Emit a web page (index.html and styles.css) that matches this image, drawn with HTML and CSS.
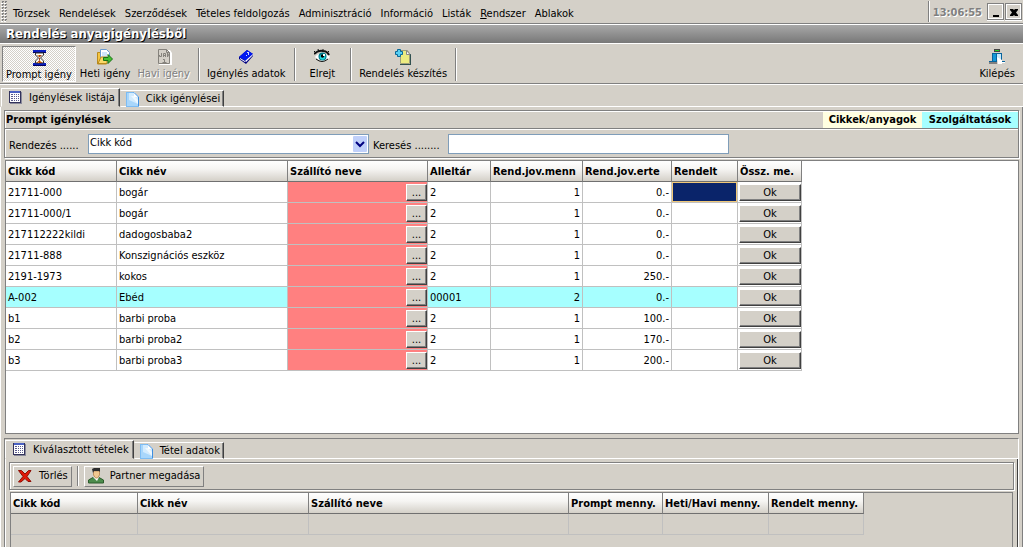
FILE: index.html
```
<!DOCTYPE html>
<html lang="hu">
<head>
<meta charset="utf-8">
<title>Rendelés anyagigénylésből</title>
<link rel="stylesheet" href="styles.css">
</head>
<body>
<svg class="defs" aria-hidden="true">
  <symbol id="i-table" viewBox="0 0 14 14">
    <path fill="#8a8a9a" d="M1 1h12v12H1z"/><path fill="#33335c" d="M0 0h12v12H0z"/><path fill="#fff" d="M1 2h10v9H1z"/>
    <path fill="#5b5b8c" d="M2 3h2v1H2zM5 3h1v1H5zM7 3h1v1H7zM9 3h1v1H9zM2 5h2v1H2zM5 5h1v1H5zM7 5h1v1H7zM9 5h1v1H9zM2 7h2v1H2zM5 7h1v1H5zM7 7h1v1H7zM9 7h1v1H9zM2 9h2v1H2zM5 9h1v1H5zM7 9h1v1H7zM9 9h1v1H9z"/>
    <path fill="#4b62c4" d="M1 0h10v2H1z"/>
  </symbol>
  <symbol id="i-page" viewBox="0 0 14 16">
    <path fill="#a8d6fb" d="M0 1h8l5 5v10H0z"/><path fill="#d2ebfe" d="M3 2h5v4h4v7L3 9z"/><path fill="#eef8ff" d="M5 5h3l4 4v4z"/>
    <path fill="#7dbcf3" d="M0 1h8v1H1v13h12v1H0z"/><path fill="#fff" d="M8 1v5h5z"/><path fill="none" stroke="#3f8fe0" d="M8 1.500l4.500 4.500v9"/>
  </symbol>
</svg>

<header class="menubar">
  <span class="grip"></span>
  <nav class="menu">
    <button>Törzsek</button><button>Rendelések</button><button>Szerződések</button><button>Tételes feldolgozás</button><button>Adminisztráció</button><button>Információ</button><button>Listák</button><button><u>R</u>endszer</button><button>Ablakok</button>
  </nav>
  <div class="clock">13:06:55</div>
  <div class="winbuttons">
    <button aria-label="Kis méret"><svg width="14" height="14" viewBox="0 0 14 14"><path d="M4 10h6v2H4z"/></svg></button>
    <button aria-label="Bezárás"><svg width="14" height="14" viewBox="0 0 14 14"><path d="M3 4h3l1 1 1-1h3v1L9 7.500 11 10v1H8l-1-1-1 1H3v-1l2-2.500L3 5z"/></svg></button>
  </div>
</header>
<h1 class="title">Rendelés anyagigénylésből</h1>

<div class="toolbar">
  <button class="tool pressed">
    <svg width="16" height="16" viewBox="0 0 16 16"><path fill="#0a1ec0" d="M2 0h13v3H2zM2 13h13v3H2z"/><path fill="#000060" d="M2 2h13v1H2zM2 15h13v1H2z"/><path fill="#fff" stroke="#333" d="M4.500 3v2l3 3-3 3v2h8v-2l-3-3 3-3V3z"/><path fill="#b04010" d="M6 5h5L8.500 7.500zM8 8h1v2H8zM5.500 13l3-3 3 3z"/><path fill="#f0b020" d="M7 5h1v1H7zM9 11h1v1H9zM7 12h1v1H7z"/></svg>
    <span>Prompt igény</span></button>
  <button class="tool">
    <svg width="16" height="16" viewBox="0 0 16 16"><path fill="#f5c542" stroke="#b98a1c" d="M.5 3.500h3V12h6v3H.5z"/><path fill="#fff" stroke="#6a9ad0" d="M3.500.5h6l3 3V11h-9z"/><path fill="#cfe4fa" d="M5 3h5v5H5z"/><path fill="#f9d868" stroke="#b98a1c" d="M1 14.500L4 8h6v6.500z"/><path fill="#44c030" stroke="#187018" d="M6.500 8.500H11V5.500l4.500 4.500-4.500 4.500v-3H6.500z"/></svg>
    <span>Heti igény</span></button>
  <button class="tool" disabled>
    <svg width="16" height="16" viewBox="0 0 16 16"><path fill="#fff" d="M3 1h11l2 3v12H3z"/><path fill="#d4d0c8" stroke="#85827c" d="M2.500.5h8l3 3v11h-11z"/><path fill="none" stroke="#85827c" d="M10.500.5v3h3M5.500 4v3.500h-2V6M7.500 8V4.500h2V8M7 6.500h3M11.500 8V4l2 4V4M7 10.500h1.500v3M6.500 13.500h4"/></svg>
    <span>Havi igény</span></button>
  <i class="sep"></i>
  <button class="tool">
    <svg width="16" height="16" viewBox="0 0 16 16"><path fill="#000080" d="M1 8l8-7 6 4v2l-7 8-7-5z"/><path fill="#0018f0" d="M1 8l8-7 6 4-7 7z"/><path fill="#fff" d="M7 12l1 1 7-7V5zM2 9l5 3v1L2 10z"/><path fill="#d0d8ff" d="M9 3h2v1H9zM10 4h1v2h-1zM8 6h1v1H8z"/></svg>
    <span>Igénylés adatok</span></button>
  <i class="sep"></i>
  <button class="tool roomy">
    <svg width="16" height="16" viewBox="0 0 16 16"><path fill="#fff" d="M1 8q7-8 15 0-7 8-15 0z"/><path fill="none" stroke="#111" stroke-width="2" d="M0 5q4-4 9-3 4 0 6 4"/><path stroke="#111" d="M2 4L0 2M5 3L4 0M9 2V0M13 4l2-2M2 10q6 5 12 0" fill="none"/><circle cx="8.500" cy="7.500" r="4" fill="#007c8c"/><circle cx="8.500" cy="8" r="2.800" fill="#20d8e0"/><circle cx="8.500" cy="7" r="1.800"/><path fill="#fff" d="M9 5h2v2H9z"/></svg>
    <span>Elrejt</span></button>
  <i class="sep"></i>
  <button class="tool">
    <svg width="16" height="16" viewBox="0 0 16 16"><path fill="#305050" d="M5 15h11v1H5zM15 5h1v10h-1z"/><path fill="#ecec80" stroke="#a0a078" d="M5.500 1.500h7l2 3v10h-9z"/><path fill="#fff" stroke="#888" d="M11.500 1.500v4h3.500z"/><path fill="#58d0f4" stroke="#086898" d="M2.500.5h3v2h2v3h-2v2h-3v-2h-2v-3h2z"/></svg>
    <span>Rendelés készítés</span></button>
  <i class="sep"></i>
  <button class="tool exit">
    <svg width="16" height="16" viewBox="0 0 16 16"><path fill="#444" d="M5 0h6v3H5z"/><path fill="#20d020" d="M6 1h4v1H6z"/><path fill="#808080" d="M0 13h8v2H0z"/><path fill="#07639c" d="M3 4h10v8h3v1h-4V5H8v8H0v-1h3z"/><path fill="#1498d8" d="M4 5h3v7H4z"/><path fill="#c6e8fa" d="M8 5h4v8l-4-2z"/><path fill="#fff" d="M8 8l5 3v4H9zM13 13h3v1h-3z"/></svg>
    <span>Kilépés</span></button>
</div>

<div class="tabs outer">
  <button class="tab active"><svg width="14" height="14"><use href="#i-table"/></svg>Igénylések listája</button>
  <button class="tab"><svg width="14" height="16"><use href="#i-page"/></svg>Cikk igénylései</button>
</div>

<main class="page">
  <section class="filter">
    <div class="filter-head">
      <h2>Prompt igénylések</h2>
      <span class="legend items">Cikkek/anyagok</span><span class="legend services">Szolgáltatások</span>
    </div>
    <div class="filter-row">
      <label for="sort">Rendezés ......</label>
      <span class="combo"><select id="sort"><option>Cikk kód</option></select>
        <svg class="arrow" width="14" height="16" viewBox="0 0 14 16"><rect width="14" height="16" rx="1" fill="#c0d0fa"/><path d="M3 6l4 4 4-4" fill="none" stroke="#000080" stroke-width="2"/></svg></span>
      <label for="search">Keresés ........</label>
      <input id="search" type="text">
    </div>
  </section>

  <section class="grid-box main-grid">
    <table class="grid">
      <colgroup><col class="w111"><col class="w171"><col class="w140"><col class="w63"><col class="w92"><col class="w89"><col class="w66"><col class="w64"></colgroup>
      <thead><tr><th>Cikk kód</th><th>Cikk név</th><th>Szállító neve</th><th>Alleltár</th><th>Rend.jov.menn</th><th>Rend.jov.erte</th><th>Rendelt</th><th>Össz. me.</th></tr></thead>
      <tbody>
        <tr><td>21711-000</td><td>bogár</td><td class="vendor"><button>...</button></td><td>2</td><td class="num">1</td><td class="num">0.-</td><td class="selected"></td><td class="act"><button>Ok</button></td></tr>
        <tr><td>21711-000/1</td><td>bogár</td><td class="vendor"><button>...</button></td><td>2</td><td class="num">1</td><td class="num">0.-</td><td></td><td class="act"><button>Ok</button></td></tr>
        <tr><td>217112222kildi</td><td>dadogosbaba2</td><td class="vendor"><button>...</button></td><td>2</td><td class="num">1</td><td class="num">0.-</td><td></td><td class="act"><button>Ok</button></td></tr>
        <tr><td>21711-888</td><td>Konszignációs eszköz</td><td class="vendor"><button>...</button></td><td>2</td><td class="num">1</td><td class="num">0.-</td><td></td><td class="act"><button>Ok</button></td></tr>
        <tr><td>2191-1973</td><td>kokos</td><td class="vendor"><button>...</button></td><td>2</td><td class="num">1</td><td class="num">250.-</td><td></td><td class="act"><button>Ok</button></td></tr>
        <tr class="service"><td>A-002</td><td>Ebéd</td><td class="vendor"><button>...</button></td><td>00001</td><td class="num">2</td><td class="num">0.-</td><td></td><td class="act"><button>Ok</button></td></tr>
        <tr><td>b1</td><td>barbi proba</td><td class="vendor"><button>...</button></td><td>2</td><td class="num">1</td><td class="num">100.-</td><td></td><td class="act"><button>Ok</button></td></tr>
        <tr><td>b2</td><td>barbi proba2</td><td class="vendor"><button>...</button></td><td>2</td><td class="num">1</td><td class="num">170.-</td><td></td><td class="act"><button>Ok</button></td></tr>
        <tr><td>b3</td><td>barbi proba3</td><td class="vendor"><button>...</button></td><td>2</td><td class="num">1</td><td class="num">200.-</td><td></td><td class="act"><button>Ok</button></td></tr>
      </tbody>
    </table>
  </section>

  <section class="lower">
    <div class="tabs">
      <button class="tab active"><svg width="14" height="14"><use href="#i-table"/></svg>Kiválasztott tételek</button>
      <button class="tab"><svg width="14" height="16"><use href="#i-page"/></svg>Tétel adatok</button>
    </div>
    <div class="lower-page">
      <div class="lower-tools">
        <button class="flat"><svg width="16" height="16" viewBox="0 0 16 16"><path fill="#e01808" stroke="#8c1006" d="M1.500 2.500h3L8 6l3.500-3.500h2.500L10 8.500l4 5h-3L8 10.500l-4 3.500H1.500L6 8.500z"/></svg>Törlés</button>
        <i class="sep"></i>
        <button class="flat"><svg width="16" height="16" viewBox="0 0 16 16"><path fill="#4c8c4c" stroke="#2c5c2c" d="M.5 15v-3L5 9.500h6l4.500 2.500v3z"/><path fill="#fff" d="M5 9h6l-2 4z"/><path fill="#f2c890" stroke="#c09060" d="M5.500 3h6v4l-2 3h-2l-2-3z"/><path fill="#2c2c2c" d="M4 1l2-1h6v4l-1-1H6L5 5z"/></svg>Partner megadása</button>
      </div>
      <div class="grid-box lower-grid">
        <table class="grid">
          <colgroup><col class="w127"><col class="w171"><col class="w260"><col class="w94"><col class="w106"><col class="w95"></colgroup>
          <thead><tr><th>Cikk kód</th><th>Cikk név</th><th>Szállító neve</th><th>Prompt menny.</th><th>Heti/Havi menny.</th><th>Rendelt menny.</th></tr></thead>
          <tbody><tr><td></td><td></td><td></td><td></td><td></td><td></td></tr></tbody>
        </table>
      </div>
    </div>
  </section>
</main>
</body>
</html>
```

FILE: styles.css
```
* { box-sizing: border-box; }
body {
  margin: 0;
  min-height: 100vh;
  display: flex;
  flex-direction: column;
  background: #d4d0c8;
  color: #000;
  font: 11px/14px "DejaVu Sans Condensed", Tahoma, sans-serif;
}
button, input, select { font: inherit; color: inherit; margin: 0; border-radius: 0; }
button { background: transparent; border: 0; padding: 0; white-space: nowrap; }
h1, h2 { margin: 0; font-size: 11px; }
svg { display: block; flex: none; }
.defs { position: absolute; width: 0; height: 0; }

.menubar { display: flex; height: 25px; border-bottom: 1px solid #fff; box-shadow: inset 0 -1px #808080; }
.grip {
  width: 6px; margin: 1px 0 2px 1px;
  background: conic-gradient(#808080 25%, transparent 0 50%, #fff 0 75%, transparent 0) 0 0 / 3px 3px;
}
.menu { display: flex; flex: 1; gap: 9px; padding: 4px 0 0 6px; }
.clock {
  padding: 5px 5px 0 4px; margin: 1px 0 2px;
  border-left: 1px solid #808080; box-shadow: inset 1px 0 #fff;
  color: #808080; font-weight: bold; text-shadow: 1px 1px #fff;
}
.winbuttons { display: flex; gap: 1px; padding: 3px 1px 0 0; }
.winbuttons button {
  width: 17px; height: 17px; padding: 1px;
  border: 1px solid #808080; box-shadow: inset 1px 1px #fff, inset -1px -1px #fff, 0 1px #fff;
}

.title {
  height: 19px; padding-left: 6px;
  background: linear-gradient(#a8a8a8, #787878);
  border-bottom: 1px solid #fff;
  color: #fff; font-size: 13px; line-height: 18px;
  text-shadow: 1px 1px #000;
}

.toolbar { display: flex; padding: 2px 5px 1px 2px; height: 41px; border-bottom: 1px solid #fff; box-shadow: inset 0 -1px #808080; }
.tool {
  display: flex; flex-direction: column; align-items: center; gap: 2px;
  padding: 3px 3px 0; margin-right: 1px; height: 36px;
}
.tool:disabled { color: #808080; text-shadow: 1px 1px #fff; }
.pressed {
  border: 1px solid; border-color: #808080 #fff #fff #808080;
  background: conic-gradient(#fff 25%, #d4d0c8 0 50%, #fff 0 75%, #d4d0c8 0) 0 0 / 2px 2px;
}
.roomy { padding: 3px 10px 0; }
.exit { margin-left: auto; margin-right: 0; }
.sep { width: 2px; margin: 2px 4px; border-left: 1px solid #808080; border-right: 1px solid #fff; }

.tabs { display: flex; align-items: flex-end; height: 19px; }
.outer { margin: 3px 0 0 1px; }
.tabs::after { content: ""; flex: 1; align-self: stretch; border-bottom: 1px solid #fff; }
.tab {
  display: flex; align-items: center; gap: 6px; height: 17px; padding: 0 3px 0 5px;
  border: 1px solid; border-color: #fff #404040 #fff #d4d0c8;
  box-shadow: inset -1px 0 #808080;
}
.tab.active { height: 19px; padding: 0 4px 0 7px; border-left-color: #fff; border-bottom-color: #d4d0c8; }

.page {
  flex: 1; display: flex; flex-direction: column;
  padding: 3px 3px 0; border-left: 1px solid #fff; border-right: 1px solid #808080;
}
.filter { border: 1px solid #808080; box-shadow: inset 1px 1px #fff, 1px 1px #fff; }
.filter-head { display: flex; height: 18px; padding: 1px 0 0 1px; border-bottom: 1px solid #808080; box-shadow: 0 1px #fff; line-height: 16px; }
.filter-head h2 { flex: 1; line-height: 16px; }
.legend { width: 96px; text-align: center; font-weight: bold; }
.items { width: 99px; background: #ffffe1; }
.services { background: #a6ffff; }
.filter-row { display: flex; align-items: center; height: 28px; padding: 1px 0 0 4px; }
.filter-row label { width: 79px; padding-top: 5px; white-space: nowrap; }
.combo { position: relative; width: 281px; }
.combo select, #search {
  display: block; width: 281px; height: 20px; padding: 0 1px 2px;
  border: 1px solid #7f9db9; background: #fff; appearance: none; outline: 0;
}
.arrow { position: absolute; right: 2px; top: 2px; pointer-events: none; }
.combo + label { padding-left: 4px; }

.grid-box { border: 1px solid #808080; }
.main-grid { flex: 1; margin: 2px 0 4px 1px; background: #fff; }
.grid { table-layout: fixed; width: 0; border-collapse: separate; border-spacing: 0; }
.grid th {
  height: 21px; padding: 2px 2px 0; text-align: left; white-space: nowrap;
  background: linear-gradient(#fff, #f6f5f3 40%, #d4d0c8);
  border-right: 1px solid #808080; border-bottom: 1px solid #707070;
}
.grid td { height: 21px; padding: 2px 2px 0; white-space: nowrap; border-right: 1px solid #c0c0c0; border-bottom: 1px solid #c0c0c0; }
.grid .num { text-align: right; }
.service td { background: #a6ffff; }
.grid .vendor { background: #ff8080; padding: 1px 0; }
.vendor button { display: block; margin-left: auto; width: 21px; height: 17px; line-height: 15px; }
.grid .act { background: #fff; padding: 1px 0 1px 1px; }
.act button { display: block; width: 62px; height: 17px; line-height: 15px; }
.grid td button {
  background: #d4d0c8; border: 1px solid; border-color: #fff #404040 #404040 #fff;
  box-shadow: inset -1px -1px #808080;
}
.grid .selected { background: #0a246a; box-shadow: inset 0 0 0 1px #f0c878; }

.lower { border: 1px solid #808080; border-right-color: #fff; border-bottom: 0; padding-top: 1px; }
.lower-page { padding: 3px 3px 0; border-left: 1px solid #fff; border-right: 1px solid #404040; }
.lower-tools {
  display: flex; align-items: center; height: 28px; padding: 0 3px;
  border: 1px solid #808080; box-shadow: inset 1px 1px #fff, 1px 1px #fff;
}
.lower-tools .sep { height: 20px; margin: 0 5px; }
.flat {
  display: flex; align-items: center; gap: 6px; height: 21px; padding: 0 3px;
  border: 1px solid; border-color: #fff #808080 #808080 #fff;
}
.lower-grid { margin: 2px 1px 0; padding-bottom: 12px; border-bottom: 0; }

.w63 { width: 63px; } .w64 { width: 64px; } .w66 { width: 66px; } .w89 { width: 89px; }
.w92 { width: 92px; } .w94 { width: 94px; } .w95 { width: 95px; } .w106 { width: 106px; }
.w111 { width: 111px; } .w127 { width: 127px; } .w140 { width: 140px; } .w171 { width: 171px; } .w260 { width: 260px; }
```
